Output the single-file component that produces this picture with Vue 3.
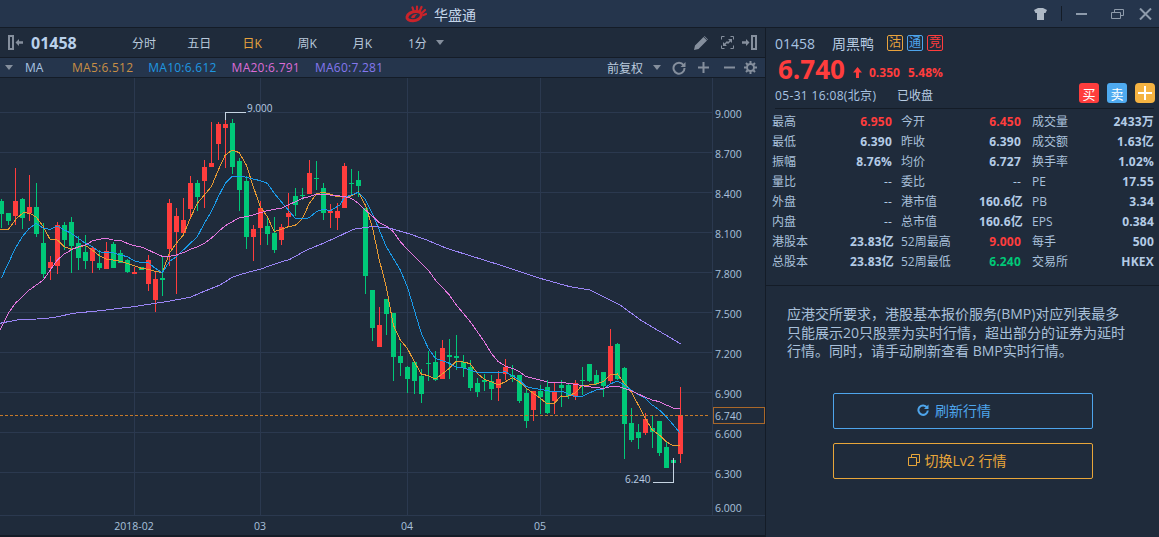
<script setup>
const tabs = [
  { t: '分时' }, { t: '五日' }, { t: '日K', on: true }, { t: '周K' }, { t: '月K' }
]
const mas = [
  { t: 'MA5:6.512', c: 'm5' }, { t: 'MA10:6.612', c: 'm10' },
  { t: 'MA20:6.791', c: 'm20' }, { t: 'MA60:7.281', c: 'm60' }
]

// candles: [isRed, wickTop, bodyTop, bodyBottom, wickBottom]
const segA = [
  [0,297,303,342,385],[0,338,339,363,375],[1,205,303,347,375],[0,294,297,353,387],[1,225,321,339,362],
  [0,250,321,402,411],[0,370,429,522,535],[1,468,486,504,540],[1,366,375,498,522],[0,366,375,420,450],
  [0,351,366,438,519],[0,408,429,474,510],[0,405,456,483,507],[1,441,444,483,519],[0,450,489,504,510],
  [1,426,453,507,507],[0,426,432,504,504],[0,450,459,489,489],[0,477,480,516,519],[1,501,516,522,522],
  [0,501,501,510,510],[1,465,480,552,573],[1,516,537,600,636],[0,471,534,540,588],[1,297,309,447,498],
  [1,324,348,396,582],[1,294,360,399,402],[1,228,249,327,354],[0,240,249,291,333],[1,180,201,243,324],
  [1,66,189,201,201],[1,66,72,132,180],[1,36,72,84,204],[0,57,69,201,222],[0,174,183,270,333],
  [0,228,243,411,447],[1,375,387,411,483],[1,303,324,384,435],[0,348,378,402,435],[0,351,399,450,459],
  [1,372,381,420,435],[1,279,339,351,381],[0,264,288,315,348],[0,264,285,288,300],[1,180,219,282,282],
  [0,183,234,237,270],[0,249,264,339,360],[1,312,333,339,384],[1,309,333,354,390],[1,189,198,324,324],
  [0,207,249,252,285],[0,213,240,258,290]
]
const segB = [
  [0,174,175,378,432],[0,420,420,534,573],[1,471,525,591,591],[0,447,447,492,555],[0,489,489,621,693],
  [0,579,618,639,678],[0,648,651,687,729],[0,636,636,693,732],[0,657,678,732,759],[0,603,639,642,693],
  [0,603,636,690,693],[1,570,594,687,687],[0,567,615,621,687],[0,555,618,624,660],[0,615,636,654,681],
  [0,630,651,714,723],[0,684,699,726,741],[0,672,690,696,723],[0,675,693,717,750],[1,663,687,714,753],
  [1,627,651,672,690],[0,645,675,681,696],[0,675,675,753,759],[0,714,729,813,834],[1,723,723,780,813],
  [0,705,723,741,792],[0,690,711,789,792],[1,699,723,753,792]
]
const segC = [
  [0,180,195,204,260],[0,190,195,228,237],[1,180,189,231,240],[0,141,180,183,225],[0,132,132,183,186],
  [0,150,165,192,195],[0,156,156,198,231],[1,27,78,183,192],[0,69,72,177,180],[0,141,144,312,417],
  [0,264,309,360,366],[0,312,336,354,387],[1,279,297,339,345],[0,288,324,336,384],[0,303,303,399,408],
  [0,366,381,444,444],[0,414,420,429,487],[1,201,285,402,429]
]
const toCandle = (base) => ([r, wt, bt, bb, wb]) => ({
  r: !!r, wt: base + wt / 3, bt: base + bt / 3, bb: base + bb / 3, wb: base + wb / 3
})
const candles = [
  ...segA.map(toCandle(100)), ...segB.map(toCandle(150)), ...segC.map(toCandle(320))
].map((c, i) => ({
  ...c, x: 1 + i * 7,
  h: Math.max(1, Math.round(c.bb - c.bt))
}))

const pts = (ox, oy, arr) => arr.map(([x, y]) => `${(ox + x / 3).toFixed(1)},${(oy + y / 3).toFixed(1)}`).join(' ')
const line = (a, b, c) => [pts(0, 100, a), pts(340, 150, b), pts(560, 320, c)].join(' ')

const ma5 = line(
  [[0,388],[25,388],[50,355],[70,338],[90,340],[109,352],[130,380],[150,418],[172,420],[193,440],[214,448],[235,442],[256,436],[277,450],[298,467],[319,477],[340,480],[361,484],[382,490],[403,497],[424,505],[445,508],[466,514],[487,518],[508,460],[529,430],[550,405],[571,355],[592,310],[613,285],[634,260],[655,210],[676,165],[697,150],[718,158],[739,195],[760,260],[781,320],[802,350],[823,395],[844,388],[865,380],[886,376],[907,357],[928,310],[949,282],[970,277],[991,282],[1012,290]],
  [[13,140],[34,138],[55,126],[76,165],[97,230],[118,330],[139,410],[160,525],[181,570],[202,595],[223,635],[244,672],[265,677],[286,687],[307,672],[328,655],[349,634],[370,636],[391,641],[412,670],[433,688],[454,695],[475,705],[496,695],[517,683],[538,695],[559,715],[580,730],[601,745],[622,762],[643,760],[664,737]],
  [[4,228],[25,228],[46,218],[67,196],[88,195],[109,192],[130,185],[151,165],[172,162],[193,190],[214,215],[235,255],[256,295],[277,330],[298,345],[319,365],[340,377],[361,376]]
)
const ma10 = line(
  [[4,535],[25,490],[46,445],[67,410],[88,385],[109,370],[130,385],[151,388],[172,378],[193,390],[214,400],[235,415],[256,430],[277,440],[298,455],[319,458],[340,458],[361,465],[382,470],[403,482],[424,488],[445,488],[466,505],[487,518],[508,485],[529,470],[550,450],[571,430],[592,410],[613,370],[634,335],[655,290],[676,250],[697,228],[718,228],[739,232],[760,237],[781,242],[802,250],[823,280],[844,305],[865,330],[886,355],[907,357],[928,353],[949,335],[970,328],[991,332]],
  [[0,165],[13,142],[34,135],[55,127],[76,148],[97,190],[118,240],[139,290],[160,325],[181,360],[202,410],[223,480],[244,550],[265,595],[286,625],[307,632],[328,640],[349,652],[370,654],[391,660],[412,667],[433,667],[454,667],[475,668],[496,665],[517,677],[538,690],[559,710],[580,715],[601,718],[622,722],[643,725],[664,723]],
  [[25,222],[46,229],[67,229],[88,219],[109,210],[130,207],[151,192],[172,183],[193,195],[214,210],[235,224],[256,235],[277,255],[298,270],[319,290],[340,315],[361,340]]
)
const ma20 = line(
  [[0,690],[25,640],[46,610],[67,590],[88,570],[109,555],[130,540],[151,510],[172,480],[193,462],[214,450],[235,440],[256,435],[277,423],[298,418],[319,415],[340,420],[361,421],[382,430],[403,437],[424,441],[445,450],[466,460],[487,469],[508,469],[529,465],[550,458],[571,448],[592,441],[613,430],[634,415],[655,395],[676,377],[697,365],[718,353],[739,350],[760,345],[781,338],[802,332],[823,328],[844,325],[865,315],[886,305],[907,295],[928,290],[949,283],[970,283],[991,285]],
  [[0,138],[13,140],[34,145],[55,160],[76,180],[97,198],[118,218],[139,228],[160,245],[181,275],[202,298],[223,318],[244,340],[265,360],[286,390],[307,412],[328,435],[349,465],[370,490],[391,515],[412,545],[433,575],[454,610],[475,635],[496,648],[517,655],[538,665],[559,680],[580,685],[601,690],[622,696],[643,697]],
  [[0,186],[25,190],[46,193],[67,197],[88,200],[109,203],[130,205],[151,200],[172,199],[193,205],[214,212],[235,222],[256,232],[277,240],[298,245],[319,255],[340,264],[361,266]]
)
const ma60 = [
  pts(0, 100, [[0,670],[50,660],[110,657],[160,653],[220,640],[300,632],[400,620],[466,610],[510,603],[570,592],[610,575],[660,555],[700,530],[740,518],[780,508],[830,490],[870,478],[920,450],[970,430]]),
  pts(340, 150, [[0,257],[40,238],[100,229],[150,235],[210,252],[260,270],[320,295],[400,320],[470,342],[540,365],[600,385],[690,410]]),
  '590,290 620,305 642,321 681,344'
].join(' ')

const hLines = [112, 152, 192, 232, 272, 312, 352, 392, 432, 472]
const vLines = [134, 260, 407, 540]
const yLabels = [
  ['9.000', 118], ['8.700', 158], ['8.400', 198], ['8.100', 238], ['7.800', 278], ['7.500', 318],
  ['7.200', 358], ['6.900', 398], ['6.600', 438], ['6.300', 478], ['6.000', 512]
]
const xLabels = [['2018-02', 134], ['03', 260], ['04', 407], ['05', 540]]

const stats = [
  ['最高', '6.950', 'red'], ['今开', '6.450', 'red'], ['成交量', '2433万', ''],
  ['最低', '6.390', ''], ['昨收', '6.390', ''], ['成交额', '1.63亿', ''],
  ['振幅', '8.76%', ''], ['均价', '6.727', ''], ['换手率', '1.02%', ''],
  ['量比', '--', 'dash'], ['委比', '--', 'dash'], ['PE', '17.55', ''],
  ['外盘', '--', 'dash'], ['港市值', '160.6亿', 'unit'], ['PB', '3.34', ''],
  ['内盘', '--', 'dash'], ['总市值', '160.6亿', 'unit'], ['EPS', '0.384', ''],
  ['港股本', '23.83亿', 'unit'], ['52周最高', '9.000', 'red'], ['每手', '500', ''],
  ['总股本', '23.83亿', 'unit'], ['52周最低', '6.240', 'green'], ['交易所', 'HKEX', '']
]
</script>

<template>
  <div class="app">
    <header class="title">
      <svg class="logo" width="22" height="18" viewBox="0 0 22 18">
        <path class="logo-ring" d="M2 12C2.500 9 6.500 6.500 11 6.500c3.800 0 5.800 1.500 5.300 4C15.700 13.500 12 15.800 8 15.800 4 15.800 1.600 14.500 2 12z" />
        <path class="logo-swirl" d="M6 12.800c.5-2.400 3.300-4.200 6.500-3.800-1.400.9-2.300 2.100-2.600 3.600-1 .8-2.900.9-3.900.2z" />
        <path class="logo-ray" d="M8.500 5.500 7.500 2.500M12 5 12 1.500M15 5.500 16.500 2M17.500 7.500 20 5M18.500 10l2.500-1" />
      </svg>
      <span class="brand">华盛通</span>
      <div class="winctl">
        <svg width="13" height="12" viewBox="0 0 13 12"><path class="ico" d="M0 2 4 0h5l4 2-1.500 3H10v7H3V5H1.500z" /></svg>
        <i class="sep"></i>
        <i class="minus"></i>
        <svg class="restore" width="13" height="10" viewBox="0 0 13 10"><path class="ico-line" d="M.5 3.500h9v6h-9zM3.500 3.500v-3h9v6h-3" /></svg>
        <svg class="close" width="13" height="12" viewBox="0 0 13 12"><path class="ico-x" d="M1 .5 12 11.500M12 .5 1 11.500" /></svg>
      </div>
    </header>

    <main class="body">
      <section class="left">
        <div class="toolbar">
          <svg class="tog" width="15" height="15" viewBox="0 0 15 15"><path class="ico-bar" d="M1 1h4v13H1z" /><path class="ico" d="M7.500 7.500 11 4v2.200h4v2.600h-4V11z" /></svg>
          <b class="code">01458</b>
          <div class="tabs">
            <span v-for="t in tabs" :key="t.t" class="tab" :class="{ on: t.on }">{{ t.t }}</span>
            <span class="tab period">1分<i class="caret"></i></span>
          </div>
          <div class="tool-r">
            <svg width="14" height="14" viewBox="0 0 14 14"><path class="ico" d="M0 14 1 9.500 9.500 1l3.500 3.500L4.500 13zM10.500 0 14 3.500l-.5.500L10 .500z" /></svg>
            <svg width="13" height="13" viewBox="0 0 13 13"><path class="ico-line" d="M.5 3.500v-3h3M9.500.5h3v3M.5 9.500v3h3M12.500 9.500v3h-3" /><path class="ico" d="M6 7 8.500 4.500 7 3h4v4L9.500 5.500 7 8zM7 6 4.500 8.500 6 10H2V6l1.500 1.500L6 5z" /></svg>
            <svg width="15" height="15" viewBox="0 0 15 15"><path class="ico" d="M0 6.200h4V4l3.500 3.500L4 11V8.800H0z" /><path class="ico-bar" d="M10 1h4v13h-4z" /></svg>
          </div>
        </div>

        <div class="mabar">
          <i class="caret small"></i>
          <span class="ma-name">MA</span>
          <span v-for="m in mas" :key="m.t" class="ma" :class="m.c">{{ m.t }}</span>
          <div class="ma-r">
            <span class="adj">前复权</span>
            <i class="caret adj-caret"></i>
            <svg width="14" height="14" viewBox="0 0 14 14"><path class="ico-thick" d="M11.500 4A5.500 5.500 0 1 0 12.500 7" /><path class="ico" d="M13.500 1v5h-5z" /></svg>
            <svg width="11" height="11" viewBox="0 0 11 11"><path class="ico" d="M4.500 0h2v4.500H11v2H6.500V11h-2V6.500H0v-2h4.500z" /></svg>
            <svg class="mn" width="11" height="11" viewBox="0 0 11 11"><path class="ico" d="M0 4.500h11v2H0z" /></svg>
            <svg width="13" height="13" viewBox="0 0 13 13"><circle class="ico-thick" cx="6.500" cy="6.500" r="3.500" /><path class="ico-dash" d="M6.500 0v2.500M6.500 10.500V13M0 6.500h2.500M10.500 6.500H13M2 2l1.700 1.700M9.300 9.300 11 11M11 2 9.300 3.700M3.700 9.300 2 11" /></svg>
          </div>
        </div>

        <svg class="chart" width="765" height="459" viewBox="0 78 765 459">
          <g class="grid">
            <rect v-for="y in hLines" :key="'h' + y" x="0" :y="y" width="712" height="1" />
            <rect v-for="x in vLines" :key="'v' + x" :x="x" y="78" width="1" height="437" />
            <rect x="712" y="78" width="1" height="437" />
            <rect x="0" y="515" width="765" height="1" />
          </g>

          <g v-for="(c, i) in candles" :key="i" :class="c.r ? 'red-c' : 'green-c'">
            <rect :x="c.x" :y="c.wt" width="1" :height="c.wb - c.wt" />
            <rect :x="c.x - 2" :y="c.bt" width="5" :height="c.h" />
          </g>

          <polyline class="l5" :points="ma5" />
          <polyline class="l10" :points="ma10" />
          <polyline class="l20" :points="ma20" />
          <polyline class="l60" :points="ma60" />

          <line class="last" x1="0" y1="415.500" x2="710" y2="415.500" />
          <rect class="last-box" x="713.500" y="407.500" width="51" height="16" />

          <path class="mark" d="M225.500 112V120M225 112.500H246M673.500 458V482.500M653 482.500H674" />
          <text class="ann" x="247" y="112">9.000</text>
          <text class="ann" x="625" y="483">6.240</text>

          <text v-for="l in yLabels" :key="l[0]" class="ax" x="715" :y="l[1]">{{ l[0] }}</text>
          <text class="ax" x="715" y="420">6.740</text>
          <text v-for="l in xLabels" :key="l[0]" class="ax mid" :x="l[1]" y="530">{{ l[0] }}</text>
          <rect class="foot" x="0" y="535" width="765" height="2" />
        </svg>
      </section>

      <aside class="right">
        <div class="quote">
          <div class="q1">
            <span class="q-code">01458</span>
            <span class="q-name">周黑鸭</span>
            <span class="badge b-o">沽</span>
            <span class="badge b-b">通</span>
            <span class="badge b-r">竞</span>
          </div>
          <div class="q2">
            <b class="price">6.740</b>
            <svg class="up" width="9" height="11" viewBox="0 0 9 11"><path d="M4.500 0 9 5.500H6V11H3V5.500H0z" /></svg>
            <b class="chg">0.350</b>
            <b class="pct">5.48%</b>
          </div>
          <div class="q3">
            <span class="q-time">05-31 16:08(北京)</span>
            <span class="q-state">已收盘</span>
            <div class="actions">
              <span class="act a-r">买</span>
              <span class="act a-b">卖</span>
              <span class="act a-o">
                <svg width="14" height="14" viewBox="0 0 14 14"><path d="M6 0h2v6h6v2H8v6H6V8H0V6h6z" /></svg>
              </span>
            </div>
          </div>
        </div>

        <div class="stats">
          <div v-for="s in stats" :key="s[0]" class="cell">
            <span class="k">{{ s[0] }}</span>
            <b class="v" :class="s[2]">{{ s[1] }}</b>
          </div>
        </div>

        <div class="notice">
          <p>应港交所要求&#xFF0C;港股基本报价服务(BMP)对应列表最多只能展示20只股票为实时行情&#xFF0C;超出部分的证券为延时行情。同时&#xFF0C;请手动刷新查看 BMP实时行情。</p>
          <button class="btn blue">
            <svg width="12" height="12" viewBox="0 0 12 12"><path class="b-arc" d="M10 3.500A4.700 4.700 0 1 0 10.800 6.500" /><path class="b-tip" d="M11.500 .500v4.500H7z" /></svg>
            刷新行情
          </button>
          <button class="btn orange">
            <svg width="12" height="12" viewBox="0 0 12 12"><path class="o-line" d="M3.500 3V.500h8v8H9" /><path class="o-line" d="M.500 3.500h8v8h-8z" /></svg>
            切换Lv2 行情
          </button>
        </div>
      </aside>
    </main>
  </div>
</template>

<style scoped>
.app {
  width: 1159px;
  height: 537px;
  display: flex;
  flex-direction: column;
  overflow: hidden;
  background: #1f2b3b;
  color: #b9cde3;
  font-family: "Open Sans", "Noto Sans CJK SC", sans-serif;
  font-size: 12px;
}
.title {
  height: 27px;
  flex: none;
  display: flex;
  align-items: center;
  padding-left: 405px;
  background: #25354c;
  border-bottom: 1px solid #141c27;
}
.logo { margin-right: 7px; }
.logo-ring { fill: none; stroke: #c9232a; stroke-width: 3; }
.logo-swirl { fill: #c9232a; }
.logo-ray { fill: none; stroke: #c9232a; stroke-width: 2.200; stroke-linecap: round; }
.brand { font-size: 14px; color: #c5d6ea; }
.winctl {
  margin-left: auto;
  display: flex;
  align-items: center;
  padding-right: 7px;
}
.sep { width: 1px; height: 15px; background: #141c27; margin: 0 14px; }
.minus { width: 11px; height: 2px; background: #8e9bab; margin-right: 24px; }
.restore { margin-right: 15px; }
.ico { fill: #858f9d; }
.ico-line { fill: none; stroke: #858f9d; stroke-width: 1; }
.ico-bar { fill: none; stroke: #858f9d; stroke-width: 2; }
.ico-thick { fill: none; stroke: #858f9d; stroke-width: 2; }
.ico-dash { fill: none; stroke: #858f9d; stroke-width: 2; }
.ico-x { fill: none; stroke: #8e9bab; stroke-width: 2; }
.winctl .ico { fill: #aeb9c6; }
.winctl .ico-line { stroke: #8e9bab; }

.body { flex: 1; display: flex; min-height: 0; }
.left {
  width: 765px;
  flex: none;
  display: flex;
  flex-direction: column;
  border-right: 1px solid #141c27;
}
.toolbar {
  height: 29px;
  flex: none;
  display: flex;
  align-items: center;
  padding: 0 8px;
  border-bottom: 1px solid #141c27;
}
.code { font-size: 16px; color: #b9d0ea; margin-left: 8px; width: 101px; }
.tabs { display: flex; }
.tab { width: 55.200px; color: #b9c9dc; white-space: nowrap; }
.tab.on { color: #e8a33d; }
.period { display: flex; align-items: center; width: auto; }
.caret {
  display: block;
  width: 0;
  height: 0;
  border-left: 4px solid transparent;
  border-right: 4px solid transparent;
  border-top: 5px solid #858f9d;
  margin-left: 9px;
}
.caret.small { margin-left: -3px; margin-right: 12px; }
.tool-r { margin-left: auto; display: flex; align-items: center; gap: 13px; }
.tool-r svg:last-child { margin-left: -5px; }

.mabar {
  height: 19px;
  flex: none;
  display: flex;
  align-items: center;
  padding: 0 8px;
  background: #25354c;
  border-bottom: 1px solid #141c27;
}
.ma-name { color: #a9c4e2; width: 47px; }
.ma { white-space: nowrap; margin-right: 15px; letter-spacing: .25px; }
.m5 { color: #c98f45; }
.m10 { color: #1f97e0; }
.m20 { color: #dc6cd6; }
.m60 { color: #8478ee; }
.ma-r { margin-left: auto; display: flex; align-items: center; gap: 12px; }
.adj { color: #b9c9dc; margin-right: -2px; }
.adj-caret { margin-left: 0; margin-right: -1px; }
.mn { margin-left: 3px; margin-right: -3px; }

.chart { display: block; flex: 1; }
.grid rect { fill: #2b394f; }
.red-c rect { fill: #ff3d3d; shape-rendering: crispEdges; }
.green-c rect { fill: #00c878; shape-rendering: crispEdges; }
polyline { fill: none; stroke-width: 1; shape-rendering: crispEdges; }
.l5 { stroke: #e89a32; }
.l10 { stroke: #1a9bea; }
.l20 { stroke: #e477e0; }
.l60 { stroke: #9a85f5; }
.last { stroke: #c77a2a; stroke-width: 1; stroke-dasharray: 3 2; }
.last-box { fill: #1f2b3b; stroke: #a9682a; stroke-width: 1; }
.mark { fill: none; stroke: #c6d4e2; stroke-width: 1; }
.ann { fill: #b9cde3; font-size: 10px; }
.ax { fill: #a9c1dc; font-size: 10.500px; }
.mid { text-anchor: middle; }
.foot { fill: #141c27; }

.right { flex: 1; min-width: 0; display: flex; flex-direction: column; }
.quote {
  height: 80px;
  flex: none;
  margin: 0 5px 0 9px;
  border-bottom: 1px solid #141c27;
}
.q1 { display: flex; align-items: center; height: 28px; padding-top: 1px; }
.q-code { font-size: 14px; color: #a9c4e2; width: 57px; }
.q-name { font-size: 14px; color: #b9cde3; width: 55px; }
.badge {
  width: 14px;
  height: 14px;
  border: 1px solid;
  border-radius: 2px;
  font-size: 12px;
  line-height: 14px;
  text-align: center;
  margin-right: 4px;
}
.b-o { color: #e8a33d; }
.b-b { color: #4ea5ec; }
.b-r { color: #ff3d3d; }
.q2 { display: flex; align-items: center; height: 24px; margin-left: 3px; color: #ff3d3d; }
.price { font-size: 26px; line-height: 24px; width: 75px; }
.up { fill: #ff3d3d; margin: 6px 7px 0 0; }
.chg { width: 39px; margin-top: 6px; }
.pct { margin-top: 6px; }
.q3 { display: flex; align-items: center; height: 27px; position: relative; }
.q-time { width: 122px; color: #a9c4e2; letter-spacing: .35px; white-space: nowrap; }
.q-state { color: #b9cde3; }
.actions { position: absolute; right: -1px; top: 2px; display: flex; gap: 8px; }
.act {
  width: 20px;
  height: 20px;
  border-radius: 3px;
  color: #fff;
  font-size: 13px;
  display: flex;
  align-items: center;
  justify-content: center;
}
.act svg { fill: #fff; }
.a-r { background: #ff3d3d; }
.a-b { background: #4eaaf0; }
.a-o { background: #f5b342; border-radius: 4px; }

.stats {
  height: 174px;
  flex: none;
  padding: 2px 0 0 6px;
  display: grid;
  grid-template-columns: 129px 131px 122px;
  grid-auto-rows: 20px;
  border-bottom: 1px solid #141c27;
}
.cell { display: flex; justify-content: space-between; align-items: center; white-space: nowrap; }
.cell:nth-child(3n+1) { padding-right: 9px; }
.cell:nth-child(3n+2) { padding-right: 11px; }
.k { color: #a9c0da; }
.v { color: #b4cbe6; letter-spacing: .2px; }
.v.red { color: #ff3d3d; }
.v.green { color: #00c878; }
.v.dash { font-weight: 400; }
.v.unit { margin-right: -2px; }

.notice { flex: 1; padding: 19px 0 0 21px; }
.notice p {
  margin: 0 0 32px;
  width: 344px;
  font-size: 14px;
  line-height: 18.500px;
  color: #a9c0da;
}
.btn {
  display: flex;
  align-items: center;
  justify-content: center;
  gap: 6px;
  width: 260px;
  height: 36px;
  margin: 0 0 14px 46px;
  padding: 0 0 2px;
  background: transparent;
  border: 1px solid;
  border-radius: 2px;
  font: 14px "Open Sans", "Noto Sans CJK SC", sans-serif;
}
.blue { color: #4ea5ec; padding-right: 18px; }
.orange { color: #e8a63a; padding-right: 12px; gap: 5px; }
.b-arc { fill: none; stroke: #4ea5ec; stroke-width: 2; }
.b-tip { fill: #4ea5ec; }
.o-line { fill: none; stroke: #e8a63a; stroke-width: 1; }
</style>

<style>
html, body { margin: 0; background: #1f2b3b; }
</style>
